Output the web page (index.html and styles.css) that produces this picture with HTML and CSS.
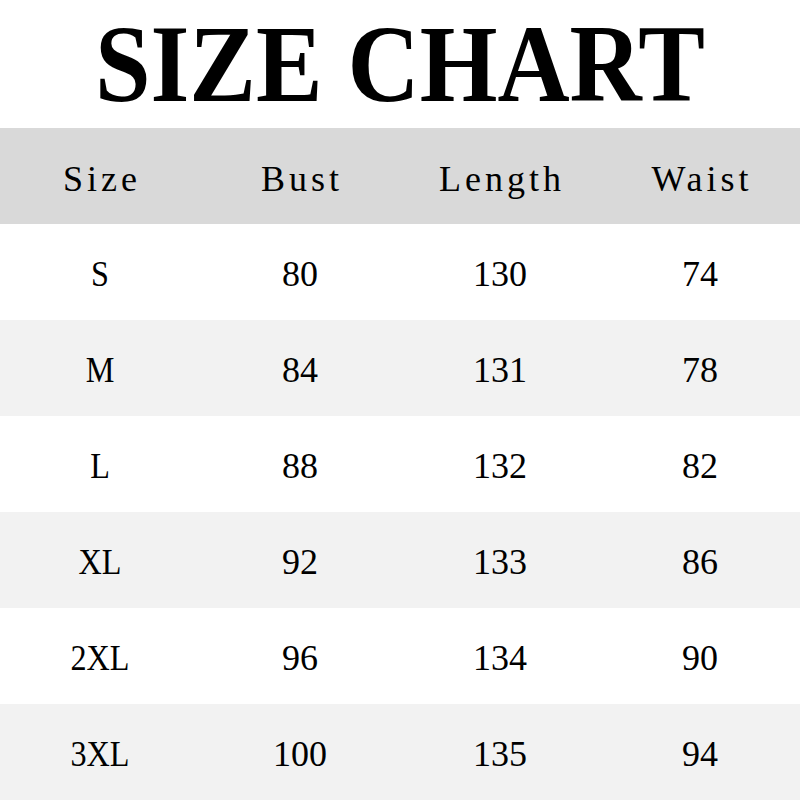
FILE: index.html
```html
<!DOCTYPE html>
<html>
<head>
<meta charset="utf-8">
<link rel="stylesheet" href="styles.css">
</head>
<body>
<div class="page">
  <div class="title"><h1>SIZE CHART</h1></div>
  <div class="table">
    <div class="row head"><span>Size</span><span>Bust</span><span>Length</span><span>Waist</span></div>
    <div class="row"><span class="sz">S</span><span>80</span><span>130</span><span>74</span></div>
    <div class="row alt"><span class="sz">M</span><span>84</span><span>131</span><span>78</span></div>
    <div class="row"><span class="sz">L</span><span>88</span><span>132</span><span>82</span></div>
    <div class="row alt"><span class="sz">XL</span><span>92</span><span>133</span><span>86</span></div>
    <div class="row"><span class="sz">2XL</span><span>96</span><span>134</span><span>90</span></div>
    <div class="row alt"><span class="sz">3XL</span><span>100</span><span>135</span><span>94</span></div>
  </div>
</div>
</body>
</html>
```
FILE: styles.css
```css
html, body {
  margin: 0;
  padding: 0;
  background: #fff;
}
.page {
  width: 800px;
  height: 800px;
  display: flex;
  flex-direction: column;
  font-family: "Liberation Serif", "Times New Roman", serif;
  color: #000;
}
.title {
  height: 128px;
  box-sizing: border-box;
  padding-top: 2px;
  display: flex;
  align-items: flex-start;
  justify-content: center;
}
.title h1 {
  margin: 0;
  font-size: 111px;
  font-weight: bold;
  line-height: 123px;
  white-space: nowrap;
  transform: scaleX(0.9);
}
.table {
  display: flex;
  flex-direction: column;
}
.row {
  height: 96px;
  display: grid;
  grid-template-columns: repeat(4, 200px);
  align-items: center;
  background: #fff;
}
.row span {
  text-align: center;
  font-size: 36px;
  line-height: 1;
  padding-top: 4px;
}
.row span.sz {
  font-size: 35px;
  transform: scaleX(0.92);
}
.row.alt {
  background: #f2f2f2;
}
.row.head {
  background: #d9d9d9;
}
.row.head span {
  letter-spacing: 4px;
  padding-left: 4px;
  padding-top: 6px;
}
```
